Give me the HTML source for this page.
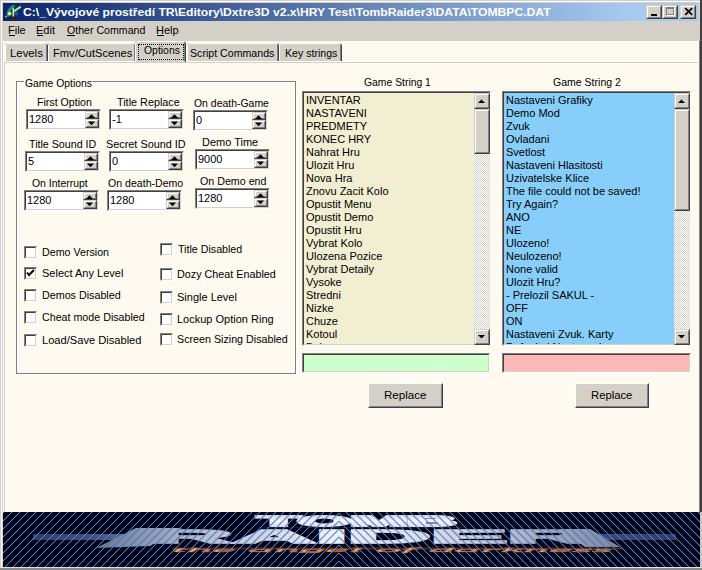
<!DOCTYPE html>
<html><head><meta charset="utf-8">
<style>
*{margin:0;padding:0;box-sizing:border-box}
html,body{width:702px;height:570px;overflow:hidden;background:#D4D0C8}
body{font-family:"Liberation Sans",sans-serif;font-size:11px;color:#000;position:relative}
.a{position:absolute}
.t{position:absolute;white-space:nowrap;line-height:13px;transform-origin:0 0}
</style></head><body>
<div class="a" style="left:0px;top:0px;width:702px;height:570px;background:#D4D0C8;"></div><div class="a" style="left:1px;top:1px;width:700px;height:1px;background:#fff;"></div><div class="a" style="left:1px;top:1px;width:1px;height:568px;background:#fff;"></div><div class="a" style="left:700px;top:0px;width:2px;height:570px;background:#404040;"></div><div class="a" style="left:699px;top:41px;width:1px;height:528px;background:#808080;"></div><div class="a" style="left:3px;top:3px;width:695px;height:18px;background:linear-gradient(to right,#0A246A,#A6CAF0 90%)"></div><svg class="a" style="left:2px;top:2px" width="24" height="20" viewBox="0 0 24 20">
<circle cx="9" cy="10" r="4" fill="#1a4a48" opacity="0.8"/>
<circle cx="14" cy="11.5" r="2.2" fill="#1a6a70" opacity="0.8"/>
<path d="M5.5 14.5 Q6 6.5 12.5 3.8" stroke="#22907c" stroke-width="2.6" fill="none"/>
<path d="M11 9.8 L18.8 4.6" stroke="#a8e47a" stroke-width="2.2" fill="none"/>
<circle cx="7.6" cy="11.6" r="1.9" fill="#e4ee6c"/>
<rect x="10.6" y="6" width="1.3" height="11.5" fill="#f4ecc0"/>
<rect x="9.6" y="14.6" width="4" height="3" fill="#3a1808"/>
<circle cx="4" cy="14.6" r="0.9" fill="#c8d8e8" opacity="0.8"/>
</svg><div class="a" style="left:646px;top:5px;width:16px;height:14px;background:#D4D0C8;border-style:solid;border-width:1px;border-color:#D4D0C8 #404040 #404040 #D4D0C8"><div class="a" style="left:0;top:0;right:0;bottom:0;border-style:solid;border-width:1px;border-color:#fff #808080 #808080 #fff"></div></div><div class="a" style="left:662px;top:5px;width:16px;height:14px;background:#D4D0C8;border-style:solid;border-width:1px;border-color:#D4D0C8 #404040 #404040 #D4D0C8"><div class="a" style="left:0;top:0;right:0;bottom:0;border-style:solid;border-width:1px;border-color:#fff #808080 #808080 #fff"></div></div><div class="a" style="left:680px;top:5px;width:16px;height:14px;background:#D4D0C8;border-style:solid;border-width:1px;border-color:#D4D0C8 #404040 #404040 #D4D0C8"><div class="a" style="left:0;top:0;right:0;bottom:0;border-style:solid;border-width:1px;border-color:#fff #808080 #808080 #fff"></div></div><div class="a" style="left:651px;top:14px;width:6px;height:2px;background:#000;"></div><div class="a" style="left:666px;top:7px;width:8px;height:8px;border:1px solid #808080;border-top-width:2px;box-shadow:1px 1px 0 #fff"></div><svg class="a" style="left:680px;top:5px" width="16" height="14"><path d="M5.2 3.2 L12.2 9.8 M12.2 3.2 L5.2 9.8" stroke="#000" stroke-width="1.8"/></svg><div class="a" style="left:3px;top:41px;width:696px;height:528px;background:#FEFAEF;"></div><div class="a" style="left:5px;top:43px;width:43px;height:19px;background:#D4D0C8;"></div><div class="a" style="left:5px;top:45px;width:1px;height:17px;background:#fff;"></div><div class="a" style="left:6px;top:44px;width:1px;height:1px;background:#fff;"></div><div class="a" style="left:7px;top:43px;width:39px;height:1px;background:#fff;"></div><div class="a" style="left:47px;top:45px;width:1px;height:17px;background:#404040;"></div><div class="a" style="left:46px;top:44px;width:1px;height:18px;background:#808080;"></div><div class="a" style="left:48px;top:43px;width:88px;height:19px;background:#D4D0C8;"></div><div class="a" style="left:48px;top:45px;width:1px;height:17px;background:#fff;"></div><div class="a" style="left:49px;top:44px;width:1px;height:1px;background:#fff;"></div><div class="a" style="left:50px;top:43px;width:84px;height:1px;background:#fff;"></div><div class="a" style="left:135px;top:45px;width:1px;height:17px;background:#404040;"></div><div class="a" style="left:134px;top:44px;width:1px;height:18px;background:#808080;"></div><div class="a" style="left:187px;top:43px;width:92px;height:19px;background:#D4D0C8;"></div><div class="a" style="left:187px;top:45px;width:1px;height:17px;background:#fff;"></div><div class="a" style="left:188px;top:44px;width:1px;height:1px;background:#fff;"></div><div class="a" style="left:189px;top:43px;width:88px;height:1px;background:#fff;"></div><div class="a" style="left:278px;top:45px;width:1px;height:17px;background:#404040;"></div><div class="a" style="left:277px;top:44px;width:1px;height:18px;background:#808080;"></div><div class="a" style="left:279px;top:43px;width:63px;height:19px;background:#D4D0C8;"></div><div class="a" style="left:279px;top:45px;width:1px;height:17px;background:#fff;"></div><div class="a" style="left:280px;top:44px;width:1px;height:1px;background:#fff;"></div><div class="a" style="left:281px;top:43px;width:59px;height:1px;background:#fff;"></div><div class="a" style="left:341px;top:45px;width:1px;height:17px;background:#404040;"></div><div class="a" style="left:340px;top:44px;width:1px;height:18px;background:#808080;"></div><div class="a" style="left:3px;top:61px;width:696px;height:1px;background:#fff;"></div><div class="a" style="left:3px;top:62px;width:1px;height:507px;background:#fff;"></div><div class="a" style="left:4px;top:62px;width:694px;height:1px;background:#D4D0C8;"></div><div class="a" style="left:4px;top:62px;width:1px;height:507px;background:#D4D0C8;"></div><div class="a" style="left:135px;top:41px;width:51px;height:21px;background:#D4D0C8;"></div><div class="a" style="left:135px;top:43px;width:1px;height:19px;background:#fff;"></div><div class="a" style="left:136px;top:42px;width:1px;height:1px;background:#fff;"></div><div class="a" style="left:137px;top:41px;width:47px;height:1px;background:#fff;"></div><div class="a" style="left:185px;top:43px;width:1px;height:19px;background:#404040;"></div><div class="a" style="left:184px;top:42px;width:1px;height:20px;background:#808080;"></div><div class="a" style="left:137px;top:61px;width:48px;height:2px;background:#D4D0C8;"></div><div class="a" style="left:138px;top:44px;width:46px;height:16px;border:1px dotted #000"></div><div class="a" style="left:16px;top:81px;width:280px;height:293px;border:1px solid #808080;box-shadow:1px 1px 0 #fff, inset 1px 1px 0 #fff"></div><div class="a" style="left:24px;top:78px;width:68px;height:7px;background:#FEFAEF;"></div><div class="a" style="left:26px;top:109px;width:75px;height:21px;background:#fff;border-style:solid;border-width:1px;border-color:#808080 #fff #fff #808080"><div class="a" style="left:0;top:0;right:0;bottom:0;border-style:solid;border-width:1px;border-color:#404040 #D4D0C8 #D4D0C8 #404040"></div></div><div class="a" style="left:85px;top:111px;width:14px;height:8px;background:#D4D0C8;border-style:solid;border-width:1px;border-color:#D4D0C8 #404040 #404040 #D4D0C8"><div class="a" style="left:0;top:0;right:0;bottom:0;border-style:solid;border-width:1px;border-color:#fff #808080 #808080 #fff"></div></div><div class="a" style="left:85px;top:119px;width:14px;height:9px;background:#D4D0C8;border-style:solid;border-width:1px;border-color:#D4D0C8 #404040 #404040 #D4D0C8"><div class="a" style="left:0;top:0;right:0;bottom:0;border-style:solid;border-width:1px;border-color:#fff #808080 #808080 #fff"></div></div><svg class="a" style="left:84px;top:111px" width="15" height="17"><polygon points="4,7 11,7 7.5,3.2" fill="#000"/><polygon points="4,10.5 11,10.5 7.5,14.3" fill="#000"/></svg><div class="t" style="left:29px;top:113px;font-size:11px">1280</div><div class="a" style="left:109px;top:109px;width:75px;height:21px;background:#fff;border-style:solid;border-width:1px;border-color:#808080 #fff #fff #808080"><div class="a" style="left:0;top:0;right:0;bottom:0;border-style:solid;border-width:1px;border-color:#404040 #D4D0C8 #D4D0C8 #404040"></div></div><div class="a" style="left:168px;top:111px;width:14px;height:8px;background:#D4D0C8;border-style:solid;border-width:1px;border-color:#D4D0C8 #404040 #404040 #D4D0C8"><div class="a" style="left:0;top:0;right:0;bottom:0;border-style:solid;border-width:1px;border-color:#fff #808080 #808080 #fff"></div></div><div class="a" style="left:168px;top:119px;width:14px;height:9px;background:#D4D0C8;border-style:solid;border-width:1px;border-color:#D4D0C8 #404040 #404040 #D4D0C8"><div class="a" style="left:0;top:0;right:0;bottom:0;border-style:solid;border-width:1px;border-color:#fff #808080 #808080 #fff"></div></div><svg class="a" style="left:167px;top:111px" width="15" height="17"><polygon points="4,7 11,7 7.5,3.2" fill="#000"/><polygon points="4,10.5 11,10.5 7.5,14.3" fill="#000"/></svg><div class="t" style="left:112px;top:113px;font-size:11px">-1</div><div class="a" style="left:193px;top:110px;width:75px;height:21px;background:#fff;border-style:solid;border-width:1px;border-color:#808080 #fff #fff #808080"><div class="a" style="left:0;top:0;right:0;bottom:0;border-style:solid;border-width:1px;border-color:#404040 #D4D0C8 #D4D0C8 #404040"></div></div><div class="a" style="left:252px;top:112px;width:14px;height:8px;background:#D4D0C8;border-style:solid;border-width:1px;border-color:#D4D0C8 #404040 #404040 #D4D0C8"><div class="a" style="left:0;top:0;right:0;bottom:0;border-style:solid;border-width:1px;border-color:#fff #808080 #808080 #fff"></div></div><div class="a" style="left:252px;top:120px;width:14px;height:9px;background:#D4D0C8;border-style:solid;border-width:1px;border-color:#D4D0C8 #404040 #404040 #D4D0C8"><div class="a" style="left:0;top:0;right:0;bottom:0;border-style:solid;border-width:1px;border-color:#fff #808080 #808080 #fff"></div></div><svg class="a" style="left:251px;top:112px" width="15" height="17"><polygon points="4,7 11,7 7.5,3.2" fill="#000"/><polygon points="4,10.5 11,10.5 7.5,14.3" fill="#000"/></svg><div class="t" style="left:196px;top:114px;font-size:11px">0</div><div class="a" style="left:25px;top:151px;width:75px;height:21px;background:#fff;border-style:solid;border-width:1px;border-color:#808080 #fff #fff #808080"><div class="a" style="left:0;top:0;right:0;bottom:0;border-style:solid;border-width:1px;border-color:#404040 #D4D0C8 #D4D0C8 #404040"></div></div><div class="a" style="left:84px;top:153px;width:14px;height:8px;background:#D4D0C8;border-style:solid;border-width:1px;border-color:#D4D0C8 #404040 #404040 #D4D0C8"><div class="a" style="left:0;top:0;right:0;bottom:0;border-style:solid;border-width:1px;border-color:#fff #808080 #808080 #fff"></div></div><div class="a" style="left:84px;top:161px;width:14px;height:9px;background:#D4D0C8;border-style:solid;border-width:1px;border-color:#D4D0C8 #404040 #404040 #D4D0C8"><div class="a" style="left:0;top:0;right:0;bottom:0;border-style:solid;border-width:1px;border-color:#fff #808080 #808080 #fff"></div></div><svg class="a" style="left:83px;top:153px" width="15" height="17"><polygon points="4,7 11,7 7.5,3.2" fill="#000"/><polygon points="4,10.5 11,10.5 7.5,14.3" fill="#000"/></svg><div class="t" style="left:28px;top:155px;font-size:11px">5</div><div class="a" style="left:109px;top:151px;width:75px;height:21px;background:#fff;border-style:solid;border-width:1px;border-color:#808080 #fff #fff #808080"><div class="a" style="left:0;top:0;right:0;bottom:0;border-style:solid;border-width:1px;border-color:#404040 #D4D0C8 #D4D0C8 #404040"></div></div><div class="a" style="left:168px;top:153px;width:14px;height:8px;background:#D4D0C8;border-style:solid;border-width:1px;border-color:#D4D0C8 #404040 #404040 #D4D0C8"><div class="a" style="left:0;top:0;right:0;bottom:0;border-style:solid;border-width:1px;border-color:#fff #808080 #808080 #fff"></div></div><div class="a" style="left:168px;top:161px;width:14px;height:9px;background:#D4D0C8;border-style:solid;border-width:1px;border-color:#D4D0C8 #404040 #404040 #D4D0C8"><div class="a" style="left:0;top:0;right:0;bottom:0;border-style:solid;border-width:1px;border-color:#fff #808080 #808080 #fff"></div></div><svg class="a" style="left:167px;top:153px" width="15" height="17"><polygon points="4,7 11,7 7.5,3.2" fill="#000"/><polygon points="4,10.5 11,10.5 7.5,14.3" fill="#000"/></svg><div class="t" style="left:112px;top:155px;font-size:11px">0</div><div class="a" style="left:195px;top:149px;width:75px;height:21px;background:#fff;border-style:solid;border-width:1px;border-color:#808080 #fff #fff #808080"><div class="a" style="left:0;top:0;right:0;bottom:0;border-style:solid;border-width:1px;border-color:#404040 #D4D0C8 #D4D0C8 #404040"></div></div><div class="a" style="left:254px;top:151px;width:14px;height:8px;background:#D4D0C8;border-style:solid;border-width:1px;border-color:#D4D0C8 #404040 #404040 #D4D0C8"><div class="a" style="left:0;top:0;right:0;bottom:0;border-style:solid;border-width:1px;border-color:#fff #808080 #808080 #fff"></div></div><div class="a" style="left:254px;top:159px;width:14px;height:9px;background:#D4D0C8;border-style:solid;border-width:1px;border-color:#D4D0C8 #404040 #404040 #D4D0C8"><div class="a" style="left:0;top:0;right:0;bottom:0;border-style:solid;border-width:1px;border-color:#fff #808080 #808080 #fff"></div></div><svg class="a" style="left:253px;top:151px" width="15" height="17"><polygon points="4,7 11,7 7.5,3.2" fill="#000"/><polygon points="4,10.5 11,10.5 7.5,14.3" fill="#000"/></svg><div class="t" style="left:198px;top:153px;font-size:11px">9000</div><div class="a" style="left:24px;top:190px;width:75px;height:21px;background:#fff;border-style:solid;border-width:1px;border-color:#808080 #fff #fff #808080"><div class="a" style="left:0;top:0;right:0;bottom:0;border-style:solid;border-width:1px;border-color:#404040 #D4D0C8 #D4D0C8 #404040"></div></div><div class="a" style="left:83px;top:192px;width:14px;height:8px;background:#D4D0C8;border-style:solid;border-width:1px;border-color:#D4D0C8 #404040 #404040 #D4D0C8"><div class="a" style="left:0;top:0;right:0;bottom:0;border-style:solid;border-width:1px;border-color:#fff #808080 #808080 #fff"></div></div><div class="a" style="left:83px;top:200px;width:14px;height:9px;background:#D4D0C8;border-style:solid;border-width:1px;border-color:#D4D0C8 #404040 #404040 #D4D0C8"><div class="a" style="left:0;top:0;right:0;bottom:0;border-style:solid;border-width:1px;border-color:#fff #808080 #808080 #fff"></div></div><svg class="a" style="left:82px;top:192px" width="15" height="17"><polygon points="4,7 11,7 7.5,3.2" fill="#000"/><polygon points="4,10.5 11,10.5 7.5,14.3" fill="#000"/></svg><div class="t" style="left:27px;top:194px;font-size:11px">1280</div><div class="a" style="left:107px;top:190px;width:75px;height:21px;background:#fff;border-style:solid;border-width:1px;border-color:#808080 #fff #fff #808080"><div class="a" style="left:0;top:0;right:0;bottom:0;border-style:solid;border-width:1px;border-color:#404040 #D4D0C8 #D4D0C8 #404040"></div></div><div class="a" style="left:166px;top:192px;width:14px;height:8px;background:#D4D0C8;border-style:solid;border-width:1px;border-color:#D4D0C8 #404040 #404040 #D4D0C8"><div class="a" style="left:0;top:0;right:0;bottom:0;border-style:solid;border-width:1px;border-color:#fff #808080 #808080 #fff"></div></div><div class="a" style="left:166px;top:200px;width:14px;height:9px;background:#D4D0C8;border-style:solid;border-width:1px;border-color:#D4D0C8 #404040 #404040 #D4D0C8"><div class="a" style="left:0;top:0;right:0;bottom:0;border-style:solid;border-width:1px;border-color:#fff #808080 #808080 #fff"></div></div><svg class="a" style="left:165px;top:192px" width="15" height="17"><polygon points="4,7 11,7 7.5,3.2" fill="#000"/><polygon points="4,10.5 11,10.5 7.5,14.3" fill="#000"/></svg><div class="t" style="left:110px;top:194px;font-size:11px">1280</div><div class="a" style="left:195px;top:188px;width:75px;height:21px;background:#fff;border-style:solid;border-width:1px;border-color:#808080 #fff #fff #808080"><div class="a" style="left:0;top:0;right:0;bottom:0;border-style:solid;border-width:1px;border-color:#404040 #D4D0C8 #D4D0C8 #404040"></div></div><div class="a" style="left:254px;top:190px;width:14px;height:8px;background:#D4D0C8;border-style:solid;border-width:1px;border-color:#D4D0C8 #404040 #404040 #D4D0C8"><div class="a" style="left:0;top:0;right:0;bottom:0;border-style:solid;border-width:1px;border-color:#fff #808080 #808080 #fff"></div></div><div class="a" style="left:254px;top:198px;width:14px;height:9px;background:#D4D0C8;border-style:solid;border-width:1px;border-color:#D4D0C8 #404040 #404040 #D4D0C8"><div class="a" style="left:0;top:0;right:0;bottom:0;border-style:solid;border-width:1px;border-color:#fff #808080 #808080 #fff"></div></div><svg class="a" style="left:253px;top:190px" width="15" height="17"><polygon points="4,7 11,7 7.5,3.2" fill="#000"/><polygon points="4,10.5 11,10.5 7.5,14.3" fill="#000"/></svg><div class="t" style="left:198px;top:192px;font-size:11px">1280</div><div class="a" style="left:24px;top:246px;width:13px;height:13px;background:#fff;border-style:solid;border-width:1px;border-color:#808080 #fff #fff #808080"><div class="a" style="left:0;top:0;right:0;bottom:0;border-style:solid;border-width:1px;border-color:#404040 #D4D0C8 #D4D0C8 #404040"></div></div><div class="a" style="left:24px;top:267px;width:13px;height:13px;background:#fff;border-style:solid;border-width:1px;border-color:#808080 #fff #fff #808080"><div class="a" style="left:0;top:0;right:0;bottom:0;border-style:solid;border-width:1px;border-color:#404040 #D4D0C8 #D4D0C8 #404040"></div></div><svg class="a" style="left:24px;top:267px" width="13" height="13"><path d="M3 5.5 L5 8 L10 3" stroke="#000" stroke-width="2" fill="none"/></svg><div class="a" style="left:24px;top:289px;width:13px;height:13px;background:#fff;border-style:solid;border-width:1px;border-color:#808080 #fff #fff #808080"><div class="a" style="left:0;top:0;right:0;bottom:0;border-style:solid;border-width:1px;border-color:#404040 #D4D0C8 #D4D0C8 #404040"></div></div><div class="a" style="left:24px;top:311px;width:13px;height:13px;background:#fff;border-style:solid;border-width:1px;border-color:#808080 #fff #fff #808080"><div class="a" style="left:0;top:0;right:0;bottom:0;border-style:solid;border-width:1px;border-color:#404040 #D4D0C8 #D4D0C8 #404040"></div></div><div class="a" style="left:24px;top:334px;width:13px;height:13px;background:#fff;border-style:solid;border-width:1px;border-color:#808080 #fff #fff #808080"><div class="a" style="left:0;top:0;right:0;bottom:0;border-style:solid;border-width:1px;border-color:#404040 #D4D0C8 #D4D0C8 #404040"></div></div><div class="a" style="left:160px;top:243px;width:13px;height:13px;background:#fff;border-style:solid;border-width:1px;border-color:#808080 #fff #fff #808080"><div class="a" style="left:0;top:0;right:0;bottom:0;border-style:solid;border-width:1px;border-color:#404040 #D4D0C8 #D4D0C8 #404040"></div></div><div class="a" style="left:160px;top:268px;width:13px;height:13px;background:#fff;border-style:solid;border-width:1px;border-color:#808080 #fff #fff #808080"><div class="a" style="left:0;top:0;right:0;bottom:0;border-style:solid;border-width:1px;border-color:#404040 #D4D0C8 #D4D0C8 #404040"></div></div><div class="a" style="left:160px;top:291px;width:13px;height:13px;background:#fff;border-style:solid;border-width:1px;border-color:#808080 #fff #fff #808080"><div class="a" style="left:0;top:0;right:0;bottom:0;border-style:solid;border-width:1px;border-color:#404040 #D4D0C8 #D4D0C8 #404040"></div></div><div class="a" style="left:160px;top:313px;width:13px;height:13px;background:#fff;border-style:solid;border-width:1px;border-color:#808080 #fff #fff #808080"><div class="a" style="left:0;top:0;right:0;bottom:0;border-style:solid;border-width:1px;border-color:#404040 #D4D0C8 #D4D0C8 #404040"></div></div><div class="a" style="left:160px;top:333px;width:13px;height:13px;background:#fff;border-style:solid;border-width:1px;border-color:#808080 #fff #fff #808080"><div class="a" style="left:0;top:0;right:0;bottom:0;border-style:solid;border-width:1px;border-color:#404040 #D4D0C8 #D4D0C8 #404040"></div></div><div class="a" style="left:302px;top:91px;width:189px;height:255px;background:#F2EED2;border-style:solid;border-width:1px;border-color:#808080 #fff #fff #808080"><div class="a" style="left:0;top:0;right:0;bottom:0;border-style:solid;border-width:1px;border-color:#404040 #D4D0C8 #D4D0C8 #404040"></div></div><div class="a" style="left:304px;top:93px;width:170px;height:251px;overflow:hidden"><div class="t" style="left:2px;top:1px;font-size:11px">INVENTAR</div><div class="t" style="left:2px;top:14px;font-size:11px">NASTAVENI</div><div class="t" style="left:2px;top:27px;font-size:11px">PREDMETY</div><div class="t" style="left:2px;top:40px;font-size:11px">KONEC HRY</div><div class="t" style="left:2px;top:53px;font-size:11px">Nahrat Hru</div><div class="t" style="left:2px;top:66px;font-size:11px">Ulozit Hru</div><div class="t" style="left:2px;top:79px;font-size:11px">Nova Hra</div><div class="t" style="left:2px;top:92px;font-size:11px">Znovu Zacit Kolo</div><div class="t" style="left:2px;top:105px;font-size:11px">Opustit Menu</div><div class="t" style="left:2px;top:118px;font-size:11px">Opustit Demo</div><div class="t" style="left:2px;top:131px;font-size:11px">Opustit Hru</div><div class="t" style="left:2px;top:144px;font-size:11px">Vybrat Kolo</div><div class="t" style="left:2px;top:157px;font-size:11px">Ulozena Pozice</div><div class="t" style="left:2px;top:170px;font-size:11px">Vybrat Detaily</div><div class="t" style="left:2px;top:183px;font-size:11px">Vysoke</div><div class="t" style="left:2px;top:196px;font-size:11px">Stredni</div><div class="t" style="left:2px;top:209px;font-size:11px">Nizke</div><div class="t" style="left:2px;top:222px;font-size:11px">Chuze</div><div class="t" style="left:2px;top:235px;font-size:11px">Kotoul</div><div class="t" style="left:2px;top:248px;font-size:11px">Beh</div></div><div class="a" style="left:474px;top:93px;width:16px;height:251px;background-color:#fff;background-image:repeating-conic-gradient(#D4D0C8 0 25%, #fff 0 50%);background-size:2px 2px"></div><div class="a" style="left:474px;top:93px;width:16px;height:16px;background:#D4D0C8;border-style:solid;border-width:1px;border-color:#D4D0C8 #404040 #404040 #D4D0C8"><div class="a" style="left:0;top:0;right:0;bottom:0;border-style:solid;border-width:1px;border-color:#fff #808080 #808080 #fff"></div></div><div class="a" style="left:474px;top:109px;width:16px;height:45px;background:#D4D0C8;border-style:solid;border-width:1px;border-color:#D4D0C8 #404040 #404040 #D4D0C8"><div class="a" style="left:0;top:0;right:0;bottom:0;border-style:solid;border-width:1px;border-color:#fff #808080 #808080 #fff"></div></div><div class="a" style="left:474px;top:329px;width:16px;height:16px;background:#D4D0C8;border-style:solid;border-width:1px;border-color:#D4D0C8 #404040 #404040 #D4D0C8"><div class="a" style="left:0;top:0;right:0;bottom:0;border-style:solid;border-width:1px;border-color:#fff #808080 #808080 #fff"></div></div><svg class="a" style="left:474px;top:93px" width="16" height="16"><polygon points="4,10 11,10 7.5,6.5" fill="#000"/></svg><svg class="a" style="left:474px;top:329px" width="16" height="16"><polygon points="4,6 11,6 7.5,9.5" fill="#000"/></svg><div class="a" style="left:502px;top:91px;width:189px;height:255px;background:#87CFFA;border-style:solid;border-width:1px;border-color:#808080 #fff #fff #808080"><div class="a" style="left:0;top:0;right:0;bottom:0;border-style:solid;border-width:1px;border-color:#404040 #D4D0C8 #D4D0C8 #404040"></div></div><div class="a" style="left:504px;top:93px;width:170px;height:251px;overflow:hidden"><div class="t" style="left:2px;top:1px;font-size:11px">Nastaveni Grafiky</div><div class="t" style="left:2px;top:14px;font-size:11px">Demo Mod</div><div class="t" style="left:2px;top:27px;font-size:11px">Zvuk</div><div class="t" style="left:2px;top:40px;font-size:11px">Ovladani</div><div class="t" style="left:2px;top:53px;font-size:11px">Svetlost</div><div class="t" style="left:2px;top:66px;font-size:11px">Nastaveni Hlasitosti</div><div class="t" style="left:2px;top:79px;font-size:11px">Uzivatelske Klice</div><div class="t" style="left:2px;top:92px;font-size:11px">The file could not be saved!</div><div class="t" style="left:2px;top:105px;font-size:11px">Try Again?</div><div class="t" style="left:2px;top:118px;font-size:11px">ANO</div><div class="t" style="left:2px;top:131px;font-size:11px">NE</div><div class="t" style="left:2px;top:144px;font-size:11px">Ulozeno!</div><div class="t" style="left:2px;top:157px;font-size:11px">Neulozeno!</div><div class="t" style="left:2px;top:170px;font-size:11px">None valid</div><div class="t" style="left:2px;top:183px;font-size:11px">Ulozit Hru?</div><div class="t" style="left:2px;top:196px;font-size:11px">- Prelozil SAKUL -</div><div class="t" style="left:2px;top:209px;font-size:11px">OFF</div><div class="t" style="left:2px;top:222px;font-size:11px">ON</div><div class="t" style="left:2px;top:235px;font-size:11px">Nastaveni Zvuk. Karty</div><div class="t" style="left:2px;top:248px;font-size:11px">Defaultni Nastaveni</div></div><div class="a" style="left:674px;top:93px;width:16px;height:251px;background-color:#fff;background-image:repeating-conic-gradient(#D4D0C8 0 25%, #fff 0 50%);background-size:2px 2px"></div><div class="a" style="left:674px;top:93px;width:16px;height:16px;background:#D4D0C8;border-style:solid;border-width:1px;border-color:#D4D0C8 #404040 #404040 #D4D0C8"><div class="a" style="left:0;top:0;right:0;bottom:0;border-style:solid;border-width:1px;border-color:#fff #808080 #808080 #fff"></div></div><div class="a" style="left:674px;top:109px;width:16px;height:102px;background:#D4D0C8;border-style:solid;border-width:1px;border-color:#D4D0C8 #404040 #404040 #D4D0C8"><div class="a" style="left:0;top:0;right:0;bottom:0;border-style:solid;border-width:1px;border-color:#fff #808080 #808080 #fff"></div></div><div class="a" style="left:674px;top:329px;width:16px;height:16px;background:#D4D0C8;border-style:solid;border-width:1px;border-color:#D4D0C8 #404040 #404040 #D4D0C8"><div class="a" style="left:0;top:0;right:0;bottom:0;border-style:solid;border-width:1px;border-color:#fff #808080 #808080 #fff"></div></div><svg class="a" style="left:674px;top:93px" width="16" height="16"><polygon points="4,10 11,10 7.5,6.5" fill="#000"/></svg><svg class="a" style="left:674px;top:329px" width="16" height="16"><polygon points="4,6 11,6 7.5,9.5" fill="#000"/></svg><div class="a" style="left:302px;top:353px;width:188px;height:20px;background:#CCFFCC;border-style:solid;border-width:1px;border-color:#808080 #fff #fff #808080"><div class="a" style="left:0;top:0;right:0;bottom:0;border-style:solid;border-width:1px;border-color:#404040 #D4D0C8 #D4D0C8 #404040"></div></div><div class="a" style="left:502px;top:353px;width:189px;height:20px;background:#FFB8B8;border-style:solid;border-width:1px;border-color:#808080 #fff #fff #808080"><div class="a" style="left:0;top:0;right:0;bottom:0;border-style:solid;border-width:1px;border-color:#404040 #D4D0C8 #D4D0C8 #404040"></div></div><div class="a" style="left:368px;top:383px;width:75px;height:25px;background:#D4D0C8;border-style:solid;border-width:1px;border-color:#fff #404040 #404040 #fff"><div class="a" style="left:0;top:0;right:0;bottom:0;border-style:solid;border-width:1px;border-color:#D4D0C8 #808080 #808080 #D4D0C8"></div></div><div class="a" style="left:575px;top:383px;width:74px;height:25px;background:#D4D0C8;border-style:solid;border-width:1px;border-color:#fff #404040 #404040 #fff"><div class="a" style="left:0;top:0;right:0;bottom:0;border-style:solid;border-width:1px;border-color:#D4D0C8 #808080 #808080 #D4D0C8"></div></div><div class="a" style="left:0px;top:567px;width:702px;height:1px;background:#E4E2DC;"></div><div class="a" style="left:0px;top:568px;width:702px;height:2px;background:#8C8C8C;"></div><div class="a" style="left:699px;top:512px;width:3px;height:55px;background:#C8C6C0;"></div><div class="a" style="left:9px;top:35px;width:6px;height:1px;background:#000;"></div><div class="a" style="left:37px;top:35px;width:6px;height:1px;background:#000;"></div><div class="a" style="left:67px;top:35px;width:8px;height:1px;background:#000;"></div><div class="a" style="left:157px;top:35px;width:7px;height:1px;background:#000;"></div><svg class="a" style="left:3px;top:512px" width="697" height="55" viewBox="3 512 697 55">
<defs>
<linearGradient id="silv" x1="0" y1="0" x2="0" y2="1"><stop offset="0" stop-color="#f4f6fa"/><stop offset="0.5" stop-color="#c8ccd4"/><stop offset="1" stop-color="#8a8e98"/></linearGradient>
<linearGradient id="silvh" x1="96" y1="0" x2="620" y2="0" gradientUnits="userSpaceOnUse"><stop offset="0" stop-color="#6a7890"/><stop offset="0.2" stop-color="#b8c0cc"/><stop offset="0.45" stop-color="#eef0f4"/><stop offset="0.7" stop-color="#d0d4dc"/><stop offset="1" stop-color="#8088a0"/></linearGradient>
<linearGradient id="silvt" x1="0" y1="0" x2="0" y2="1"><stop offset="0" stop-color="#c8ccd8"/><stop offset="0.5" stop-color="#f4f6fa"/><stop offset="1" stop-color="#d0d4dc"/></linearGradient>
<linearGradient id="orng" x1="0" y1="0" x2="0" y2="1"><stop offset="0" stop-color="#301408" stop-opacity="0"/><stop offset="0.5" stop-color="#c06020"/><stop offset="1" stop-color="#301408" stop-opacity="0"/></linearGradient>
<linearGradient id="streak" x1="0" y1="0" x2="1" y2="0"><stop offset="0" stop-color="#34446a" stop-opacity="0.9"/><stop offset="0.6" stop-color="#46567a"/><stop offset="1" stop-color="#7080a0"/></linearGradient>
<linearGradient id="streak2" x1="0" y1="0" x2="1" y2="0"><stop offset="0" stop-color="#5a6a8c"/><stop offset="0.4" stop-color="#3c4c72"/><stop offset="1" stop-color="#34446a" stop-opacity="0.9"/></linearGradient>
</defs>
<rect x="3" y="512" width="697" height="55" fill="#020412"/>
<rect x="33" y="534" width="110" height="6" fill="url(#streak)"/>
<rect x="560" y="534" width="116" height="6" fill="url(#streak2)"/>
<polygon points="96,548 136,528 182,528 150,546" fill="url(#silvh)"/>
<polygon points="560,529 590,529 620,547 585,547" fill="url(#silvh)"/>
<text x="150" y="543" font-family="Liberation Sans" font-weight="bold" font-size="20" textLength="440" lengthAdjust="spacingAndGlyphs" fill="url(#silvh)" transform="translate(543,0) scale(1,1)" style="display:none">RAIDER</text>
<g transform="translate(0,543) scale(1,0.84) translate(0,-543)"><text x="150" y="543" font-family="Liberation Sans" font-weight="bold" font-size="21" stroke="url(#silvh)" stroke-width="1.6" textLength="440" lengthAdjust="spacingAndGlyphs" fill="url(#silvh)">RAIDER</text></g>
<text x="258" y="526" font-family="Liberation Sans" font-weight="bold" font-size="14" stroke="url(#silvt)" stroke-width="1.8" textLength="198" lengthAdjust="spacingAndGlyphs" fill="url(#silvt)">TOMB</text>
<rect x="258" y="527" width="206" height="1" fill="#1a1a22"/>
<rect x="172" y="546" width="450" height="5" fill="url(#orng)" opacity="0.45"/>
<text x="172" y="551.5" font-family="Liberation Serif" font-style="italic" font-size="7" textLength="440" lengthAdjust="spacingAndGlyphs" fill="#ffd8a0" stroke="#c86a28" stroke-width="0.3">the angel of darkness</text>
<path d="M339 57 L-61 457 M339 57 L739 457 M339 65 L-61 465 M339 65 L739 465 M339 73 L-61 473 M339 73 L739 473 M339 81 L-61 481 M339 81 L739 481 M339 89 L-61 489 M339 89 L739 489 M339 97 L-61 497 M339 97 L739 497 M339 105 L-61 505 M339 105 L739 505 M339 113 L-61 513 M339 113 L739 513 M339 121 L-61 521 M339 121 L739 521 M339 129 L-61 529 M339 129 L739 529 M339 137 L-61 537 M339 137 L739 537 M339 145 L-61 545 M339 145 L739 545 M339 153 L-61 553 M339 153 L739 553 M339 161 L-61 561 M339 161 L739 561 M339 169 L-61 569 M339 169 L739 569 M339 177 L-61 577 M339 177 L739 577 M339 185 L-61 585 M339 185 L739 585 M339 193 L-61 593 M339 193 L739 593 M339 201 L-61 601 M339 201 L739 601 M339 209 L-61 609 M339 209 L739 609 M339 217 L-61 617 M339 217 L739 617 M339 225 L-61 625 M339 225 L739 625 M339 233 L-61 633 M339 233 L739 633 M339 241 L-61 641 M339 241 L739 641 M339 249 L-61 649 M339 249 L739 649 M339 257 L-61 657 M339 257 L739 657 M339 265 L-61 665 M339 265 L739 665 M339 273 L-61 673 M339 273 L739 673 M339 281 L-61 681 M339 281 L739 681 M339 289 L-61 689 M339 289 L739 689 M339 297 L-61 697 M339 297 L739 697 M339 305 L-61 705 M339 305 L739 705 M339 313 L-61 713 M339 313 L739 713 M339 321 L-61 721 M339 321 L739 721 M339 329 L-61 729 M339 329 L739 729 M339 337 L-61 737 M339 337 L739 737 M339 345 L-61 745 M339 345 L739 745 M339 353 L-61 753 M339 353 L739 753 M339 361 L-61 761 M339 361 L739 761 M339 369 L-61 769 M339 369 L739 769 M339 377 L-61 777 M339 377 L739 777 M339 385 L-61 785 M339 385 L739 785 M339 393 L-61 793 M339 393 L739 793 M339 401 L-61 801 M339 401 L739 801 M339 409 L-61 809 M339 409 L739 809 M339 417 L-61 817 M339 417 L739 817 M339 425 L-61 825 M339 425 L739 825 M339 433 L-61 833 M339 433 L739 833 M339 441 L-61 841 M339 441 L739 841 M339 449 L-61 849 M339 449 L739 849 M339 457 L-61 857 M339 457 L739 857 M339 465 L-61 865 M339 465 L739 865 M339 473 L-61 873 M339 473 L739 873 M339 481 L-61 881 M339 481 L739 881 M339 489 L-61 889 M339 489 L739 889 M339 497 L-61 897 M339 497 L739 897 M339 505 L-61 905 M339 505 L739 905 M339 513 L-61 913 M339 513 L739 913 M339 521 L-61 921 M339 521 L739 921 M339 529 L-61 929 M339 529 L739 929 M339 537 L-61 937 M339 537 L739 937 M339 545 L-61 945 M339 545 L739 945 M339 553 L-61 953 M339 553 L739 953 M339 561 L-61 961 M339 561 L739 961 M339 569 L-61 969 M339 569 L739 969 M339 577 L-61 977 M339 577 L739 977 M339 585 L-61 985 M339 585 L739 985 M339 593 L-61 993 M339 593 L739 993" stroke="#1840a0" stroke-width="1.6" fill="none" opacity="0.4"/><path d="M339 57 L-61 457 M339 57 L739 457 M339 65 L-61 465 M339 65 L739 465 M339 73 L-61 473 M339 73 L739 473 M339 81 L-61 481 M339 81 L739 481 M339 89 L-61 489 M339 89 L739 489 M339 97 L-61 497 M339 97 L739 497 M339 105 L-61 505 M339 105 L739 505 M339 113 L-61 513 M339 113 L739 513 M339 121 L-61 521 M339 121 L739 521 M339 129 L-61 529 M339 129 L739 529 M339 137 L-61 537 M339 137 L739 537 M339 145 L-61 545 M339 145 L739 545 M339 153 L-61 553 M339 153 L739 553 M339 161 L-61 561 M339 161 L739 561 M339 169 L-61 569 M339 169 L739 569 M339 177 L-61 577 M339 177 L739 577 M339 185 L-61 585 M339 185 L739 585 M339 193 L-61 593 M339 193 L739 593 M339 201 L-61 601 M339 201 L739 601 M339 209 L-61 609 M339 209 L739 609 M339 217 L-61 617 M339 217 L739 617 M339 225 L-61 625 M339 225 L739 625 M339 233 L-61 633 M339 233 L739 633 M339 241 L-61 641 M339 241 L739 641 M339 249 L-61 649 M339 249 L739 649 M339 257 L-61 657 M339 257 L739 657 M339 265 L-61 665 M339 265 L739 665 M339 273 L-61 673 M339 273 L739 673 M339 281 L-61 681 M339 281 L739 681 M339 289 L-61 689 M339 289 L739 689 M339 297 L-61 697 M339 297 L739 697 M339 305 L-61 705 M339 305 L739 705 M339 313 L-61 713 M339 313 L739 713 M339 321 L-61 721 M339 321 L739 721 M339 329 L-61 729 M339 329 L739 729 M339 337 L-61 737 M339 337 L739 737 M339 345 L-61 745 M339 345 L739 745 M339 353 L-61 753 M339 353 L739 753 M339 361 L-61 761 M339 361 L739 761 M339 369 L-61 769 M339 369 L739 769 M339 377 L-61 777 M339 377 L739 777 M339 385 L-61 785 M339 385 L739 785 M339 393 L-61 793 M339 393 L739 793 M339 401 L-61 801 M339 401 L739 801 M339 409 L-61 809 M339 409 L739 809 M339 417 L-61 817 M339 417 L739 817 M339 425 L-61 825 M339 425 L739 825 M339 433 L-61 833 M339 433 L739 833 M339 441 L-61 841 M339 441 L739 841 M339 449 L-61 849 M339 449 L739 849 M339 457 L-61 857 M339 457 L739 857 M339 465 L-61 865 M339 465 L739 865 M339 473 L-61 873 M339 473 L739 873 M339 481 L-61 881 M339 481 L739 881 M339 489 L-61 889 M339 489 L739 889 M339 497 L-61 897 M339 497 L739 897 M339 505 L-61 905 M339 505 L739 905 M339 513 L-61 913 M339 513 L739 913 M339 521 L-61 921 M339 521 L739 921 M339 529 L-61 929 M339 529 L739 929 M339 537 L-61 937 M339 537 L739 937 M339 545 L-61 945 M339 545 L739 945 M339 553 L-61 953 M339 553 L739 953 M339 561 L-61 961 M339 561 L739 961 M339 569 L-61 969 M339 569 L739 969 M339 577 L-61 977 M339 577 L739 977 M339 585 L-61 985 M339 585 L739 985 M339 593 L-61 993 M339 593 L739 993" stroke="#5890ee" stroke-width="0.9" fill="none"/>
</svg>
<div class="t" style="left:23.00px;top:6px;font-size:11px;font-weight:bold;color:#fff;transform:scaleX(1.1023)">C:\_Vývojové prostředí TR\Editory\Dxtre3D v2.x\HRY Test\TombRaider3\DATA\TOMBPC.DAT</div><div class="t" style="left:8.00px;top:24px;font-size:11px;font-weight:normal;color:#000;transform:scaleX(1.0000)">File</div><div class="t" style="left:36.00px;top:24px;font-size:11px;font-weight:normal;color:#000;transform:scaleX(1.0000)">Edit</div><div class="t" style="left:67.00px;top:24px;font-size:11px;font-weight:normal;color:#000;transform:scaleX(0.9630)">Other Command</div><div class="t" style="left:156.00px;top:24px;font-size:11px;font-weight:normal;color:#000;transform:scaleX(1.0000)">Help</div><div class="t" style="left:9.97px;top:47px;font-size:11px;font-weight:normal;color:#000;transform:scaleX(1.0323)">Levels</div><div class="t" style="left:52.99px;top:47px;font-size:11px;font-weight:normal;color:#000;transform:scaleX(1.0130)">Fmv/CutScenes</div><div class="t" style="left:144.00px;top:44px;font-size:11px;font-weight:normal;color:#000;transform:scaleX(0.9474)">Options</div><div class="t" style="left:190.03px;top:47px;font-size:11px;font-weight:normal;color:#000;transform:scaleX(0.9651)">Script Commands</div><div class="t" style="left:285.04px;top:47px;font-size:11px;font-weight:normal;color:#000;transform:scaleX(0.9623)">Key strings</div><div class="t" style="left:25.00px;top:77px;font-size:11px;font-weight:normal;color:#000;transform:scaleX(0.9437)">Game Options</div><div class="t" style="left:37.04px;top:96px;font-size:11px;font-weight:normal;color:#000;transform:scaleX(0.9636)">First Option</div><div class="t" style="left:117.00px;top:96px;font-size:11px;font-weight:normal;color:#000;transform:scaleX(0.9844)">Title Replace</div><div class="t" style="left:194.00px;top:97px;font-size:11px;font-weight:normal;color:#000;transform:scaleX(0.9494)">On death-Game</div><div class="t" style="left:29.00px;top:138px;font-size:11px;font-weight:normal;color:#000;transform:scaleX(0.9710)">Title Sound ID</div><div class="t" style="left:106.01px;top:138px;font-size:11px;font-weight:normal;color:#000;transform:scaleX(0.9873)">Secret Sound ID</div><div class="t" style="left:202.00px;top:136px;font-size:11px;font-weight:normal;color:#000;transform:scaleX(1.0000)">Demo Time</div><div class="t" style="left:32.00px;top:177px;font-size:11px;font-weight:normal;color:#000;transform:scaleX(0.9492)">On Interrupt</div><div class="t" style="left:108.00px;top:177px;font-size:11px;font-weight:normal;color:#000;transform:scaleX(0.9615)">On death-Demo</div><div class="t" style="left:200.00px;top:175px;font-size:11px;font-weight:normal;color:#000;transform:scaleX(0.9706)">On Demo end</div><div class="t" style="left:42.03px;top:246px;font-size:11px;font-weight:normal;color:#000;transform:scaleX(0.9706)">Demo Version</div><div class="t" style="left:42.00px;top:267px;font-size:11px;font-weight:normal;color:#000;transform:scaleX(1.0000)">Select Any Level</div><div class="t" style="left:42.03px;top:289px;font-size:11px;font-weight:normal;color:#000;transform:scaleX(0.9747)">Demos Disabled</div><div class="t" style="left:42.03px;top:311px;font-size:11px;font-weight:normal;color:#000;transform:scaleX(0.9712)">Cheat mode Disabled</div><div class="t" style="left:41.99px;top:334px;font-size:11px;font-weight:normal;color:#000;transform:scaleX(1.0103)">Load/Save Disabled</div><div class="t" style="left:178.00px;top:243px;font-size:11px;font-weight:normal;color:#000;transform:scaleX(0.9697)">Title Disabled</div><div class="t" style="left:177.02px;top:268px;font-size:11px;font-weight:normal;color:#000;transform:scaleX(0.9798)">Dozy Cheat Enabled</div><div class="t" style="left:177.00px;top:291px;font-size:11px;font-weight:normal;color:#000;transform:scaleX(1.0000)">Single Level</div><div class="t" style="left:177.00px;top:313px;font-size:11px;font-weight:normal;color:#000;transform:scaleX(1.0000)">Lockup Option Ring</div><div class="t" style="left:177.03px;top:333px;font-size:11px;font-weight:normal;color:#000;transform:scaleX(0.9732)">Screen Sizing Disabled</div><div class="t" style="left:364.00px;top:76px;font-size:11px;font-weight:normal;color:#000;transform:scaleX(0.9429)">Game String 1</div><div class="t" style="left:553.00px;top:76px;font-size:11px;font-weight:normal;color:#000;transform:scaleX(0.9571)">Game String 2</div><div class="t" style="left:383.95px;top:389px;font-size:11px;font-weight:normal;color:#000;transform:scaleX(1.0513)">Replace</div><div class="t" style="left:590.97px;top:389px;font-size:11px;font-weight:normal;color:#000;transform:scaleX(1.0256)">Replace</div>
</body></html>
